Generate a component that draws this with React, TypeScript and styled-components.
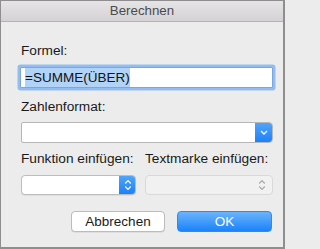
import styled, { createGlobalStyle } from "styled-components";

const GlobalStyle = createGlobalStyle`
  html, body {
    margin: 0;
    padding: 0;
    background: #ececec;
  }
  * {
    box-sizing: border-box;
  }
`;

const Window = styled.div`
  width: 285px;
  height: 249px;
  display: flex;
  flex-direction: column;
  background: #ececec;
  border: 1px solid #8e8e8e;
  border-right-width: 2px;
  border-bottom-width: 2px;
  font-family: "Liberation Sans", Arial, sans-serif;
  font-size: 13.7px;
  color: #1a1a1a;
  overflow: hidden;
`;

const TitleBar = styled.div`
  height: 21px;
  flex: none;
  display: flex;
  align-items: center;
  justify-content: center;
  background: linear-gradient(#e6e4e6, #d4d2d4);
  border-bottom: 1px solid #b3b3b3;
  color: #4b4b4b;
  font-size: 13.3px;
  padding-bottom: 1px;
`;

const Body = styled.div`
  display: flex;
  flex-direction: column;
  padding: 21px 10px 0 20px;
`;

const Label = styled.div<{ $gap?: number }>`
  height: 16px;
  line-height: 16px;
  margin-top: ${(p) => p.$gap ?? 0}px;
  margin-bottom: ${(p) => (p.$gap === undefined ? 8 : 7)}px;
  white-space: nowrap;
`;

const TextField = styled.div`
  height: 21px;
  margin-left: -1px;
  display: flex;
  align-items: center;
  padding-left: 4px;
  background: #fff;
  border: 1px solid #7aa7de;
  box-shadow: 0 0 0 2.5px #93bdf0;
  border-radius: 1px;
`;

const Selection = styled.span`
  display: inline-block;
  height: 19px;
  line-height: 19px;
  background: #b2d3f8;
  color: #111;
  font-size: 13.5px;
`;

const Select = styled.div`
  height: 21px;
  display: flex;
  background: #fff;
  border: 1px solid #b6b6b6;
  border-radius: 2px 4px 4px 2px;
  overflow: hidden;
`;

const SelectValue = styled.div`
  flex: 1;
`;

const BlueCap = styled.div<{ $w: number }>`
  width: ${(p) => p.$w}px;
  flex: none;
  display: flex;
  align-items: center;
  justify-content: center;
  background: linear-gradient(#52a6fb, #1b7ff9);
  margin: -1px -1px -1px 0;
`;

const Row = styled.div`
  display: grid;
  grid-template-columns: 115px 1fr;
  column-gap: 9px;
`;

const Field = styled.div`
  display: flex;
  flex-direction: column;
`;

const RowLabel = styled.div`
  height: 16px;
  line-height: 16px;
  margin: 8px 0 8px;
  white-space: nowrap;
`;

const Popup = styled.div<{ $disabled?: boolean }>`
  height: 20px;
  display: flex;
  border-radius: 4px;
  overflow: hidden;
  background: ${(p) => (p.$disabled ? "#f1f1f1" : "#fff")};
  border: 1px solid ${(p) => (p.$disabled ? "#d9d9d9" : "#bdbdbd")};
  box-shadow: ${(p) => (p.$disabled ? "none" : "0 0.5px 0.5px rgba(0,0,0,0.12)")};
`;

const GrayCap = styled.div`
  width: 20px;
  display: flex;
  align-items: center;
  justify-content: center;
`;

const Buttons = styled.div`
  display: flex;
  justify-content: flex-end;
  gap: 12px;
  margin-top: 16px;
  padding-right: 1px;
`;

const Button = styled.div<{ $primary?: boolean }>`
  width: 95px;
  height: 21px;
  display: flex;
  align-items: center;
  justify-content: center;
  border-radius: 4px;
  font-size: 13.5px;
  ${(p) =>
    p.$primary
      ? `
    background: linear-gradient(#6bb4fb, #1a83fb);
    border: 1px solid #2d8cf4;
    color: #fff;
  `
      : `
    width: 94px;
    background: #fff;
    border: 1px solid #bcbcbc;
    color: #1a1a1a;
    box-shadow: 0 0.5px 0.5px rgba(0,0,0,0.12);
  `}
`;

function Down() {
  return (
    <svg width="8" height="5" viewBox="0 0 8 5">
      <path d="M1 1 L4 4 L7 1" fill="none" stroke="#fff" strokeWidth="1.3" />
    </svg>
  );
}

function UpDown({ color }: { color: string }) {
  return (
    <svg width="8" height="12" viewBox="0 0 8 12">
      <path d="M1.2 4.5 L4 1.7 L6.8 4.5" fill="none" stroke={color} strokeWidth="1.2" />
      <path d="M1.2 7.5 L4 10.3 L6.8 7.5" fill="none" stroke={color} strokeWidth="1.2" />
    </svg>
  );
}

export default function App() {
  return (
    <>
      <GlobalStyle />
      <Window>
        <TitleBar>Berechnen</TitleBar>
        <Body>
          <Label>Formel:</Label>
          <TextField>
            <Selection>=SUMME(ÜBER)</Selection>
          </TextField>
          <Label $gap={11}>Zahlenformat:</Label>
          <Select>
            <SelectValue />
            <BlueCap $w={18}>
              <Down />
            </BlueCap>
          </Select>
          <Row>
            <Field>
              <RowLabel>Funktion einfügen:</RowLabel>
              <Popup>
                <SelectValue />
                <BlueCap $w={17}>
                  <UpDown color="#fff" />
                </BlueCap>
              </Popup>
            </Field>
            <Field>
              <RowLabel>Textmarke einfügen:</RowLabel>
              <Popup $disabled>
                <SelectValue />
                <GrayCap>
                  <UpDown color="#a8a8a8" />
                </GrayCap>
              </Popup>
            </Field>
          </Row>
          <Buttons>
            <Button>Abbrechen</Button>
            <Button $primary>OK</Button>
          </Buttons>
        </Body>
      </Window>
    </>
  );
}
